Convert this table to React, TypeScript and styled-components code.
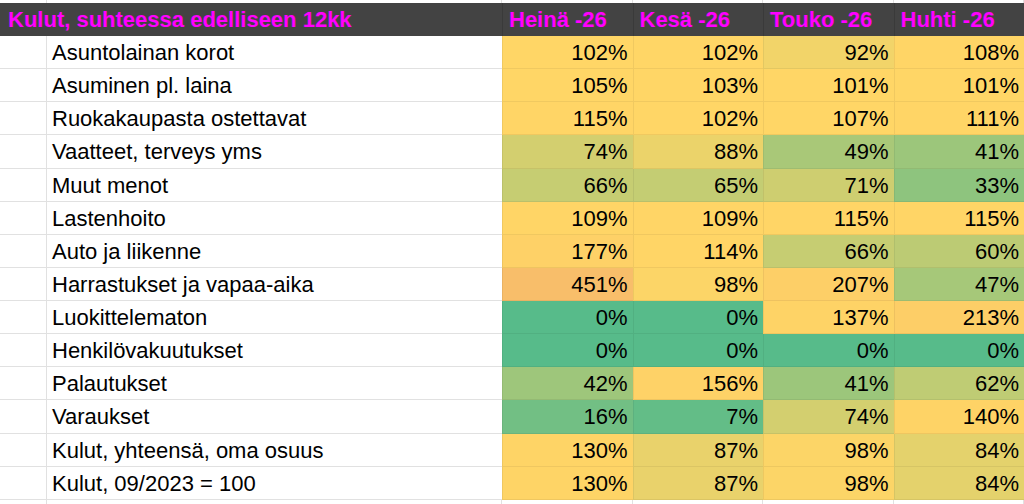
import React from "react";
import styled, { createGlobalStyle } from "styled-components";

const GlobalStyle = createGlobalStyle`
  html, body { margin: 0; padding: 0; background: #ffffff; overflow: hidden; }
  body { font-family: "Liberation Sans", Arial, Helvetica, sans-serif; }
`;

const Sheet = styled.div`
  display: grid;
  grid-template-columns: 47px 455px 130.5px 130.5px 130.5px 1fr;
  grid-template-rows: 3px 33px repeat(14, 33.14px) 1fr;
  width: 1024px;
  height: 504px;
  overflow: hidden;
  font-size: 22px;
  color: #000;
`;

const Spacer = styled.div`
  border-right: 1px solid #e1e1e1;
  box-sizing: border-box;
`;

const HeaderTitle = styled.div`
  grid-column: span 2;
  background: #434343;
  color: #ff00ff;
  font-weight: bold;
  display: flex;
  align-items: center;
  padding-left: 8px;
  padding-top: 1px;
  white-space: nowrap;
  box-sizing: border-box;
`;

const HeaderMonth = styled.div`
  background: #434343;
  color: #ff00ff;
  font-weight: bold;
  display: flex;
  align-items: center;
  padding-left: 6px;
  padding-top: 1px;
  white-space: nowrap;
  box-sizing: border-box;
  border-left: 1px solid #3a3a3a;
`;

const IndexCell = styled.div`
  border-right: 1px solid #e1e1e1;
  border-bottom: 1px solid #e1e1e1;
  box-sizing: border-box;
`;

const LabelCell = styled.div`
  display: flex;
  align-items: center;
  padding-left: 5px;
  padding-top: 2px;
  white-space: nowrap;
  border-bottom: 1px solid #e1e1e1;
  box-sizing: border-box;
`;

const ValueCell = styled.div<{ $bg: string }>`
  display: flex;
  align-items: center;
  justify-content: flex-end;
  padding-right: 5px;
  padding-top: 2px;
  background: ${(p) => p.$bg};
  border-left: 1px solid rgba(0, 0, 0, 0.06);
  border-bottom: 1px solid rgba(0, 0, 0, 0.06);
  box-sizing: border-box;
`;

const green = [87, 187, 138];
const yellow = [255, 214, 102];
const red = [230, 124, 115];

function mix(a: number[], b: number[], t: number): string {
  const c = a.map((v, i) => Math.round(v + (b[i] - v) * t));
  return `rgb(${c[0]}, ${c[1]}, ${c[2]})`;
}

function scale(v: number): string {
  if (v <= 100) return mix(green, yellow, v / 100);
  return mix(yellow, red, Math.min(1, (v - 100) / 1300));
}

const months = ["Heinä -26", "Kesä -26", "Touko -26", "Huhti -26"];

const rows: { label: string; values: number[] }[] = [
  { label: "Asuntolainan korot", values: [102, 102, 92, 108] },
  { label: "Asuminen pl. laina", values: [105, 103, 101, 101] },
  { label: "Ruokakaupasta ostettavat", values: [115, 102, 107, 111] },
  { label: "Vaatteet, terveys yms", values: [74, 88, 49, 41] },
  { label: "Muut menot", values: [66, 65, 71, 33] },
  { label: "Lastenhoito", values: [109, 109, 115, 115] },
  { label: "Auto ja liikenne", values: [177, 114, 66, 60] },
  { label: "Harrastukset ja vapaa-aika", values: [451, 98, 207, 47] },
  { label: "Luokittelematon", values: [0, 0, 137, 213] },
  { label: "Henkilövakuutukset", values: [0, 0, 0, 0] },
  { label: "Palautukset", values: [42, 156, 41, 62] },
  { label: "Varaukset", values: [16, 7, 74, 140] },
  { label: "Kulut, yhteensä, oma osuus", values: [130, 87, 98, 84] },
  { label: "Kulut, 09/2023 = 100", values: [130, 87, 98, 84] },
];

export default function App() {
  return (
    <>
      <GlobalStyle />
      <Sheet>
        {Array.from({ length: 6 }).map((_, i) => (
          <Spacer key={`top-${i}`} />
        ))}
        <HeaderTitle>Kulut, suhteessa edelliseen 12kk</HeaderTitle>
        {months.map((m) => (
          <HeaderMonth key={m}>{m}</HeaderMonth>
        ))}
        {rows.map((r) => (
          <React.Fragment key={r.label}>
            <IndexCell />
            <LabelCell>{r.label}</LabelCell>
            {r.values.map((v, i) => (
              <ValueCell key={i} $bg={scale(v)}>
                {v}%
              </ValueCell>
            ))}
          </React.Fragment>
        ))}
        {Array.from({ length: 6 }).map((_, i) => (
          <Spacer key={`bottom-${i}`} />
        ))}
      </Sheet>
    </>
  );
}
